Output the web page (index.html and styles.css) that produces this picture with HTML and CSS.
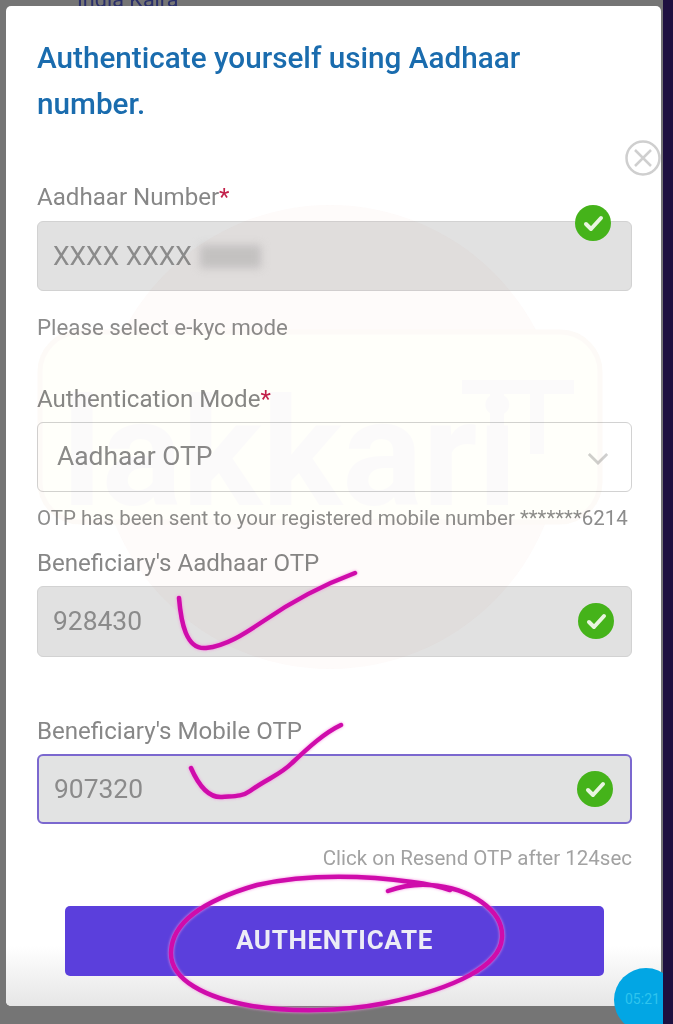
FILE: index.html
```html
<!DOCTYPE html>
<html lang="en">
<head>
	<meta charset="UTF-8">
	<title>Authenticate</title>
	<link rel="stylesheet" href="styles.css">
</head>
<body>
<div class="screen">
	<div class="backdrop">
		<div class="peek">India Kaira</div>
		<div class="modal">
			<h1 class="title">Authenticate yourself using Aadhaar number.</h1>

			<svg class="close" viewBox="0 0 36 36">
				<circle cx="18" cy="18" r="16.5"/>
				<path d="M10 10 L26 26 M26 10 L10 26"/>
			</svg>

			<div class="label first">Aadhaar Number<span class="req">*</span></div>
			<div class="box filled badge_host">
				<span>XXXX XXXX</span><span class="masked"></span>
				<svg class="tick tick_badge" viewBox="0 0 38 38"><circle cx="19" cy="19" r="18"/><path d="M12 20 L17 25 L27 14"/></svg>
			</div>

			<div class="note note_mode">Please select e-kyc mode</div>

			<div class="label mode">Authentication Mode<span class="req">*</span></div>
			<div class="box select">
				<span>Aadhaar OTP</span>
				<svg class="chevron" viewBox="0 0 24 14"><path d="M2 2 L12 12 L22 2"/></svg>
			</div>

			<div class="note note_sent">OTP has been sent to your registered mobile number *******6214</div>

			<div class="label aadhaar_otp">Beneficiary's Aadhaar OTP</div>
			<div class="box filled otp tall">
				<span>928430</span>
				<svg class="tick" viewBox="0 0 38 38"><circle cx="19" cy="19" r="18"/><path d="M12 20 L17 25 L27 14"/></svg>
			</div>

			<div class="label mobile_otp">Beneficiary's Mobile OTP</div>
			<div class="box filled otp focused">
				<span>907320</span>
				<svg class="tick" viewBox="0 0 38 38"><circle cx="19" cy="19" r="18"/><path d="M12 20 L17 25 L27 14"/></svg>
			</div>

			<div class="note resend">Click on Resend OTP after 124sec</div>

			<button class="auth_btn">AUTHENTICATE</button>
			<div class="fade"></div>
		</div>
	</div>
	<div class="edge"></div>
	<div class="timer">05:21</div>

	<!-- watermark sits over the form, very faint -->
	<svg class="overlay watermark" viewBox="0 0 673 1024">
		<circle cx="330" cy="437" r="232" fill="#f9e7e3"/>
		<rect x="40" y="332" width="560" height="190" rx="40" fill="#fffbe6" stroke="#f3e6d6" stroke-width="5"/>
		<text x="62" y="505" class="wm_text">lakkari</text>
		<rect x="462" y="380" width="112" height="14" fill="#e8e6e2"/>
		<rect x="490" y="394" width="14" height="100" fill="#e8e6e2"/>
		<rect x="530" y="394" width="14" height="60" fill="#e8e6e2"/>
	</svg>

	<!-- pen marks -->
	<svg class="overlay pen" viewBox="0 0 673 1024">
		<path d="M179 598 C181 622 186 650 206 648 C226 646 244 634 262 622 C288 604 320 586 355 573"/>
		<path d="M191 768 C198 784 208 798 222 797 C232 796 242 797 250 791 C268 778 280 775 292 763 C308 748 324 733 341 725"/>
		<path d="M388 891 C402 886 416 884 430 885 C470 888 504 910 502 938 C500 966 456 988 386 1003 C340 1012 290 1012 252 1006 C206 998 170 980 171 952 C172 922 205 900 257 885 C310 873 370 876 412 882 C428 884 438 886 450 890"/>
	</svg>
</div>
</body>
</html>
```

FILE: styles.css
```css
* {box-sizing: border-box;}

html, body {margin: 0; padding: 0;}

body {
	width: 673px;
	height: 1024px;
	overflow: hidden;
	font-family: Roboto, "Liberation Sans", sans-serif;
}

.screen {
	position: relative;
	display: flex;
	width: 673px;
	height: 1024px;
	overflow: hidden;
	filter: blur(0.6px);
}

.backdrop {
	flex: 1;
	background: #757575;
	padding-left: 6px;
	padding-right: 2px;
}

.edge {
	position: relative;
	z-index: 3;
	width: 10px;
	background: #1e1040;
}

.peek {
	height: 6px;
	overflow: hidden;
	padding-left: 71px;
	font-size: 21.6px;
	line-height: 0;
	color: #2a2f6a;
}

.modal {
	position: relative;
	height: 1000px;
	background: #fff;
	border-radius: 5px;
	padding: 29px 29px 0 31px;
}

.title {
	margin: 0;
	width: 560px;
	font-size: 29.7px;
	line-height: 46px;
	font-weight: 500;
	color: #1a6cae;
}

.close {
	position: absolute;
	left: 619px;
	top: 134px;
	width: 36px;
	height: 36px;
	fill: none;
	stroke: #cfcfcf;
	stroke-width: 2.5;
}

.label {
	height: 28px;
	font-size: 24.1px;
	line-height: 28px;
	color: #878787;
}

.req {color: #c2204a;}

.first {margin-top: 56px;}
.mode {margin-top: 45px;}
.aadhaar_otp {margin-top: 18px;}
.mobile_otp {margin-top: 60px;}

.box {
	position: relative;
	display: flex;
	align-items: center;
	height: 70px;
	margin-top: 10px;
	padding: 0 15px;
	border: 1px solid #d2d2d2;
	border-radius: 6px;
	font-size: 26.4px;
	color: #8b8b8b;
}

.filled {background: #e1e1e1;}
.tall {height: 71px; margin-top: 9px; padding-bottom: 2px;}
.select {margin-top: 9px; padding-left: 19px; padding-bottom: 3px; justify-content: space-between; background: #fff;}
.otp {justify-content: space-between; margin-top: 9px; padding-right: 16px;}

.focused {
	border: 2px solid #7b68cf;
	background: #e2e3e3;
}

.masked {
	width: 61px;
	height: 23px;
	margin-left: 8px;
	background: #c4c4c4;
	filter: blur(4px);
}

.tick {width: 38px; height: 38px;}
.tick circle {fill: #45b31a;}
.tick path {fill: none; stroke: #e9f5e0; stroke-width: 4; stroke-linecap: round; stroke-linejoin: round;}

.tick_badge {
	position: absolute;
	right: 19px;
	top: -18px;
}

.chevron {
	width: 22px;
	height: 13px;
	margin-right: 7px;
	margin-top: 6px;
	fill: none;
	stroke: #cfcfcf;
	stroke-width: 3;
}

.note {
	height: 26px;
	font-size: 22.3px;
	line-height: 26px;
	color: #8c8c8c;
	white-space: nowrap;
}

.note_mode {margin-top: 23px;}
.note_sent {margin-top: 13px; font-size: 20.5px;}

.resend {
	margin-top: 21px;
	font-size: 20.5px;
	text-align: right;
	color: #a2a2a2;
}

.auth_btn {
	position: relative;
	z-index: 1;
	display: block;
	width: 539px;
	height: 70px;
	margin: 35px 0 0 28px;
	padding: 0 0 3px;
	border: 0;
	border-radius: 5px;
	background: #5b3fdc;
	color: #ececf6;
	font-family: Roboto, "Liberation Sans", sans-serif;
	font-size: 26px;
	font-weight: 700;
	letter-spacing: 0.7px;
}

.fade {
	position: absolute;
	left: 0;
	right: 0;
	bottom: 0;
	height: 60px;
	border-radius: 0 0 5px 5px;
	background: linear-gradient(#ffffff, #e6e6e6);
}

.timer {
	position: absolute;
	z-index: 2;
	left: 614px;
	top: 968px;
	width: 64px;
	height: 64px;
	padding: 22px 0 0 11px;
	border-radius: 50%;
	background: #02a6e4;
	color: #2fc4ee;
	font-size: 14px;
	line-height: 18px;
}

.overlay {
	position: absolute;
	left: 0;
	top: 0;
	width: 673px;
	height: 1024px;
	pointer-events: none;
}

.watermark {
	z-index: 1;
	mix-blend-mode: multiply;
	opacity: 0.2;
}

.wm_text {
	font-family: Roboto, "Liberation Sans", sans-serif;
	font-size: 150px;
	font-weight: 700;
	fill: #e8e6e2;
}

.pen {z-index: 2;}

.pen path {
	fill: none;
	stroke: #cf0cab;
	stroke-width: 4.5;
	stroke-linecap: round;
	stroke-linejoin: round;
	filter: drop-shadow(0 0 1.5px #f58fe0);
}
```
